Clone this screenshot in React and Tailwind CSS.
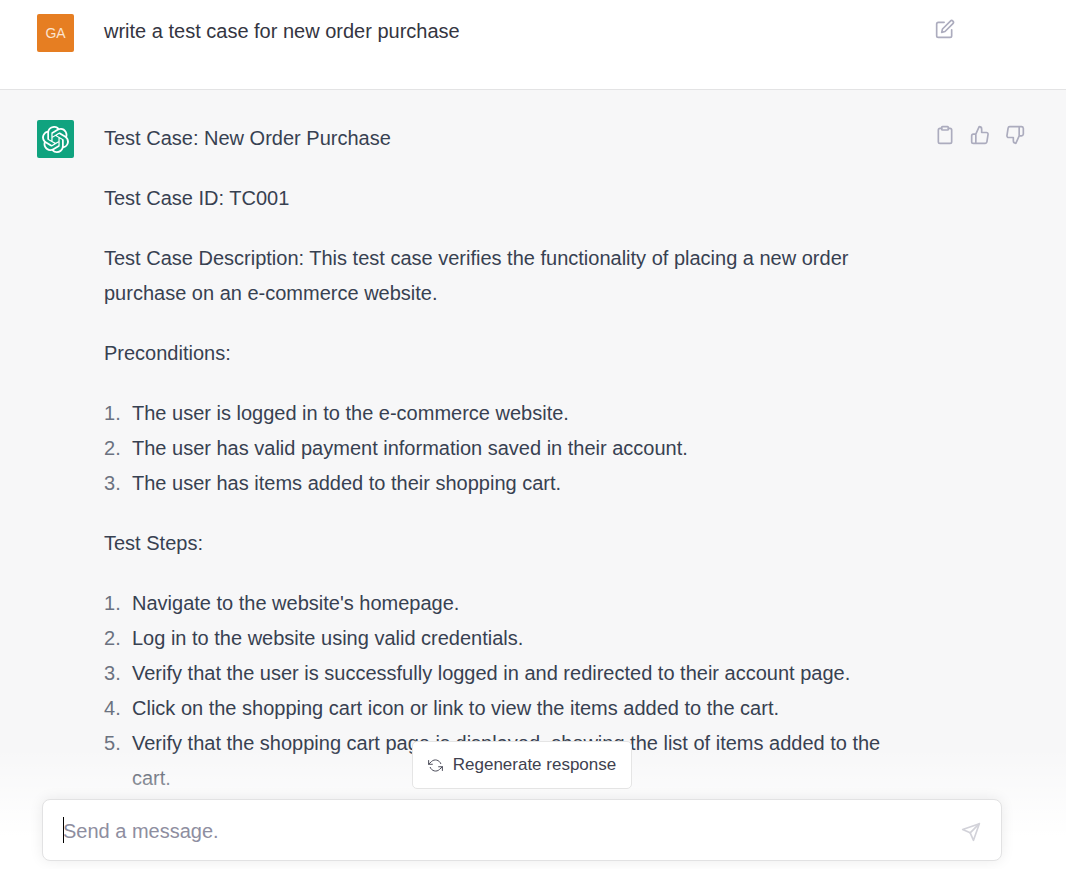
import React from "react";
import {
  FiClipboard,
  FiEdit,
  FiRefreshCcw,
  FiSend,
  FiThumbsDown,
  FiThumbsUp,
} from "react-icons/fi";
import { SiOpenai } from "react-icons/si";

const preconditions = [
  "The user is logged in to the e-commerce website.",
  "The user has valid payment information saved in their account.",
  "The user has items added to their shopping cart.",
];

const steps = [
  "Navigate to the website's homepage.",
  "Log in to the website using valid credentials.",
  "Verify that the user is successfully logged in and redirected to their account page.",
  "Click on the shopping cart icon or link to view the items added to the cart.",
  "Verify that the shopping cart page is displayed, showing the list of items added to the cart.",
];

function IconButton({ label, children }) {
  return (
    <button type="button" aria-label={label} className="text-[#acacbe]">
      {children}
    </button>
  );
}

function Message({ avatar, actions, children }) {
  return (
    <div className="flex pl-[37px] pr-10">
      {avatar}
      <div className="ml-[30px] mr-6 min-w-0 flex-1 text-[20px] leading-[35px]">
        {children}
      </div>
      <div className="mt-[5px] flex w-[91px] shrink-0 items-start gap-[15px]">
        {actions}
      </div>
    </div>
  );
}

function NumberedList({ items }) {
  return (
    <ol>
      {items.map((item, index) => (
        <li key={item} className="flex">
          <span className="w-7 shrink-0 text-[#6b7280]">{index + 1}.</span>
          <span>{item}</span>
        </li>
      ))}
    </ol>
  );
}

export default function App() {
  return (
    <main className="relative h-screen overflow-hidden bg-[#f7f7f8] font-['Liberation_Sans',sans-serif] text-[#374151]">
      <section className="border-b border-[#e3e3e4] bg-white pb-[37px] pt-[14px] text-[#343541]">
        <Message
          avatar={
            <span className="flex h-[38px] w-[37px] items-center justify-center rounded-xs bg-[#e67e22] text-sm text-[#fbe3cf]">
              GA
            </span>
          }
          actions={
            <IconButton label="Edit message">
              <FiEdit size={20} />
            </IconButton>
          }
        >
          <p>write a test case for new order purchase</p>
        </Message>
      </section>

      <section className="pt-[30px]">
        <Message
          avatar={
            <span className="flex h-[38px] w-[37px] items-center justify-center rounded-xs bg-[#10a37f] text-white">
              <SiOpenai size={27} />
            </span>
          }
          actions={
            <>
              <IconButton label="Copy">
                <FiClipboard size={20} />
              </IconButton>
              <IconButton label="Good response">
                <FiThumbsUp size={20} />
              </IconButton>
              <IconButton label="Bad response">
                <FiThumbsDown size={20} />
              </IconButton>
            </>
          }
        >
          <div className="flex flex-col gap-[25px] pt-px">
            <p>Test Case: New Order Purchase</p>
            <p>Test Case ID: TC001</p>
            <p>
              Test Case Description: This test case verifies the functionality
              of placing a new order purchase on an e-commerce website.
            </p>
            <p>Preconditions:</p>
            <NumberedList items={preconditions} />
            <p>Test Steps:</p>
            <NumberedList items={steps} />
          </div>
        </Message>
      </section>

      {/* composer floats over the conversation */}
      <footer className="absolute inset-x-0 bottom-0 bg-linear-to-b from-transparent from-5% to-white to-75% pb-2 pl-[42px] pr-16">
        <div className="flex justify-center">
          <button
            type="button"
            className="mb-[10px] flex h-12 items-center gap-[10px] rounded-[5px] border border-[#e5e5e5] bg-white px-[15px] text-[17px] text-[#40414f]"
          >
            <FiRefreshCcw size={15} strokeWidth={1.5} />
            Regenerate response
          </button>
        </div>
        <form className="relative flex h-[62px] items-center rounded-lg border border-[#e2e2e3] bg-white px-5 pt-0.5 shadow-[0_0_14px_rgba(0,0,0,0.08)]">
          <span className="absolute left-5 top-[17px] h-[26px] w-px bg-black" />
          <input
            type="text"
            aria-label="Send a message."
            placeholder="Send a message."
            className="min-w-0 flex-1 bg-transparent text-[20px] outline-none placeholder:text-[#8e8ea0]"
          />
          <button
            type="button"
            aria-label="Send"
            className="pt-0.5 text-[#d2d2d9]"
          >
            <FiSend size={20} />
          </button>
        </form>
      </footer>
    </main>
  );
}
